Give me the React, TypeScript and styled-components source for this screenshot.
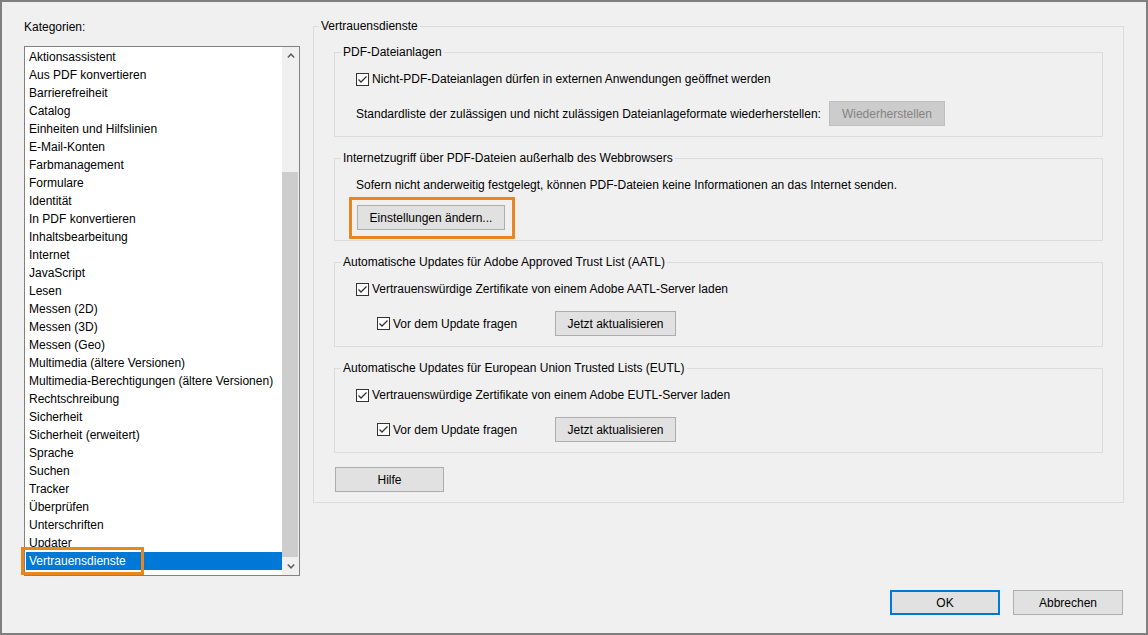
import React from "react";
import styled, { createGlobalStyle } from "styled-components";

const GlobalStyle = createGlobalStyle`
  html, body {
    margin: 0;
    padding: 0;
    background: #f0f0f0;
  }
  body {
    font-family: "Liberation Sans", Arial, sans-serif;
    font-size: 12px;
    color: #000;
  }
  * {
    box-sizing: border-box;
  }
`;

const categories = [
  "Aktionsassistent",
  "Aus PDF konvertieren",
  "Barrierefreiheit",
  "Catalog",
  "Einheiten und Hilfslinien",
  "E-Mail-Konten",
  "Farbmanagement",
  "Formulare",
  "Identität",
  "In PDF konvertieren",
  "Inhaltsbearbeitung",
  "Internet",
  "JavaScript",
  "Lesen",
  "Messen (2D)",
  "Messen (3D)",
  "Messen (Geo)",
  "Multimedia (ältere Versionen)",
  "Multimedia-Berechtigungen (ältere Versionen)",
  "Rechtschreibung",
  "Sicherheit",
  "Sicherheit (erweitert)",
  "Sprache",
  "Suchen",
  "Tracker",
  "Überprüfen",
  "Unterschriften",
  "Updater",
  "Vertrauensdienste",
];

const Window = styled.div`
  width: 1148px;
  height: 635px;
  border: 2px solid #7f7f7f;
  background: #f0f0f0;
  display: grid;
  grid-template-columns: 311px 1fr;
  grid-template-rows: 574px 1fr;
`;

const Sidebar = styled.div`
  padding: 16px 0 0 22px;
  display: flex;
  flex-direction: column;
`;

const Label = styled.div`
  line-height: 18px;
  height: 18px;
`;

const ListBox = styled.div`
  position: relative;
  margin-top: 10px;
  width: 276px;
  height: 530px;
  border: 1px solid #828282;
  background: #fff;
  display: flex;
`;

const Items = styled.ul`
  list-style: none;
  margin: 0;
  padding: 1px 0 0;
  flex: 1;
`;

const Item = styled.li<{ $selected?: boolean }>`
  position: relative;
  height: 18px;
  line-height: 18px;
  white-space: nowrap;
  padding-left: ${(p) => (p.$selected ? "3px" : "4px")};
  margin-left: ${(p) => (p.$selected ? "1px" : "0")};
  background: ${(p) => (p.$selected ? "#0078d7" : "transparent")};
  color: ${(p) => (p.$selected ? "#fff" : "#000")};
`;

const Scrollbar = styled.div`
  width: 17px;
  background: #f0f0f0;
  display: flex;
  flex-direction: column;
`;

const ScrollArrow = styled.div`
  height: 17px;
  display: flex;
  align-items: center;
  justify-content: center;
`;

const Track = styled.div`
  flex: 1;
  display: flex;
  flex-direction: column;
  padding: 108px 1px 1px 0;
`;

const Thumb = styled.div`
  flex: 1;
  background: #cdcdcd;
`;

const Highlight = styled.span<{ $top: number; $left: number; $w: number; $h: number }>`
  position: absolute;
  top: ${(p) => p.$top}px;
  left: ${(p) => p.$left}px;
  width: ${(p) => p.$w}px;
  height: ${(p) => p.$h}px;
  border: 3px solid #e8861f;
  pointer-events: none;
`;

const Main = styled.div`
  padding: 24px 22px 0 0;
`;

const Group = styled.div<{ $outer?: boolean }>`
  position: relative;
  border: 1px solid #dcdcdc;
  display: flex;
  flex-direction: column;
  padding: ${(p) => (p.$outer ? "25px 20px 10px 20px" : "17px 20px 10px 21px")};
`;

const Legend = styled.span<{ $outer?: boolean }>`
  position: absolute;
  top: -10px;
  left: ${(p) => (p.$outer ? "5px" : "6px")};
  padding: 0 2px;
  line-height: 18px;
  background: #f0f0f0;
  white-space: nowrap;
`;

const GroupStack = styled.div`
  display: flex;
  flex-direction: column;
  gap: 21px;
`;

const Rows = styled.div<{ $gap: number }>`
  display: flex;
  flex-direction: column;
  gap: ${(p) => p.$gap}px;
`;

const Row = styled.div<{ $indent?: number; $gap?: number }>`
  position: relative;
  display: flex;
  align-items: center;
  min-height: 18px;
  padding-left: ${(p) => p.$indent ?? 0}px;
  gap: ${(p) => p.$gap ?? 0}px;
  white-space: nowrap;
`;

const Text = styled.span`
  line-height: 18px;
`;

const Check = styled.label<{ $width?: number }>`
  display: flex;
  align-items: center;
  gap: 3px;
  line-height: 18px;
  width: ${(p) => (p.$width ? `${p.$width}px` : "auto")};
`;

const Box = styled.span`
  width: 13px;
  height: 13px;
  border: 1px solid #333;
  background: #fff;
  display: flex;
  align-items: center;
  justify-content: center;
`;

const Button = styled.button<{ $width: number }>`
  position: relative;
  width: ${(p) => p.$width}px;
  height: 25px;
  padding: 0;
  font: inherit;
  color: #000;
  background: #e1e1e1;
  border: 1px solid #adadad;
  flex-shrink: 0;
  outline: none;

  &:disabled {
    background: #cccccc;
    border-color: #bfbfbf;
    color: #838383;
  }
`;

const DefaultButton = styled(Button)`
  border: 2px solid #0078d7;
`;

const HelpButton = styled(Button)`
  margin: 14px 0 0 1px;
  align-self: flex-start;
`;

const Footer = styled.div`
  grid-column: 1 / -1;
  display: flex;
  justify-content: flex-end;
  align-items: flex-start;
  gap: 13px;
  padding: 14px 23px 0 0;
`;

const CheckMark = () => (
  <svg width="11" height="11" viewBox="0 0 11 11">
    <polyline points="1.5,5.5 4,8 9.5,2.5" fill="none" stroke="#333" strokeWidth="1.3" />
  </svg>
);

const CheckBox = ({ children, width }: { children: React.ReactNode; width?: number }) => (
  <Check $width={width}>
    <Box>
      <CheckMark />
    </Box>
    {children}
  </Check>
);

const Chevron = ({ up }: { up?: boolean }) => (
  <svg width="8" height="5" viewBox="0 0 8 5">
    <polyline
      points={up ? "0.8,4.5 4,1.2 7.2,4.5" : "0.8,0.5 4,3.8 7.2,0.5"}
      fill="none"
      stroke="#606060"
      strokeWidth="1.5"
    />
  </svg>
);

export default function App() {
  return (
    <>
      <GlobalStyle />
      <Window>
        <Sidebar>
          <Label>Kategorien:</Label>
          <ListBox>
            <Items>
              {categories.map((c) => (
                <Item key={c} $selected={c === "Vertrauensdienste"}>
                  {c}
                  {c === "Vertrauensdienste" && <Highlight $top={-5} $left={-5} $w={123} $h={28} />}
                </Item>
              ))}
            </Items>
            <Scrollbar>
              <ScrollArrow>
                <Chevron up />
              </ScrollArrow>
              <Track>
                <Thumb />
              </Track>
              <ScrollArrow>
                <Chevron />
              </ScrollArrow>
            </Scrollbar>
          </ListBox>
        </Sidebar>

        <Main>
          <Group $outer>
            <Legend $outer>Vertrauensdienste</Legend>
            <GroupStack>
              <Group>
                <Legend>PDF-Dateianlagen</Legend>
                <Rows $gap={13}>
                  <Row>
                    <CheckBox>Nicht-PDF-Dateianlagen dürfen in externen Anwendungen geöffnet werden</CheckBox>
                  </Row>
                  <Row $gap={8}>
                    <Text>
                      Standardliste der zulässigen und nicht zulässigen Dateianlageformate wiederherstellen:
                    </Text>
                    <Button $width={116} disabled>
                      Wiederherstellen
                    </Button>
                  </Row>
                </Rows>
              </Group>

              <Group>
                <Legend>Internetzugriff über PDF-Dateien außerhalb des Webbrowsers</Legend>
                <Rows $gap={11}>
                  <Row>
                    <Text>
                      Sofern nicht anderweitig festgelegt, können PDF-Dateien keine Informationen an das Internet
                      senden.
                    </Text>
                  </Row>
                  <Row $indent={1}>
                    <Button $width={148}>
                      Einstellungen ändern...
                      <Highlight $top={-9} $left={-9} $w={166} $h={42} />
                    </Button>
                  </Row>
                </Rows>
              </Group>

              <Group>
                <Legend>Automatische Updates für Adobe Approved Trust List (AATL)</Legend>
                <Rows $gap={13}>
                  <Row>
                    <CheckBox>Vertrauenswürdige Zertifikate von einem Adobe AATL-Server laden</CheckBox>
                  </Row>
                  <Row $indent={21}>
                    <CheckBox width={178}>Vor dem Update fragen</CheckBox>
                    <Button $width={121}>Jetzt aktualisieren</Button>
                  </Row>
                </Rows>
              </Group>

              <Group>
                <Legend>Automatische Updates für European Union Trusted Lists (EUTL)</Legend>
                <Rows $gap={13}>
                  <Row>
                    <CheckBox>Vertrauenswürdige Zertifikate von einem Adobe EUTL-Server laden</CheckBox>
                  </Row>
                  <Row $indent={21}>
                    <CheckBox width={178}>Vor dem Update fragen</CheckBox>
                    <Button $width={121}>Jetzt aktualisieren</Button>
                  </Row>
                </Rows>
              </Group>
            </GroupStack>
            <HelpButton $width={109}>Hilfe</HelpButton>
          </Group>
        </Main>

        <Footer>
          <DefaultButton $width={110}>OK</DefaultButton>
          <Button $width={110}>Abbrechen</Button>
        </Footer>
      </Window>
    </>
  );
}
